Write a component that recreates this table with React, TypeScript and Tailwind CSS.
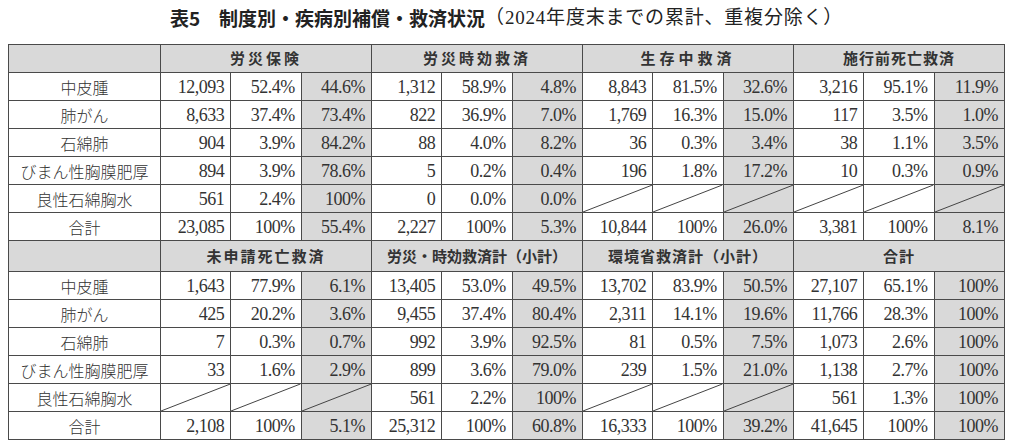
const NUM = "font-['Liberation_Serif','Times_New_Roman',serif]";
const JP = "font-['Noto_Sans_CJK_JP','Noto_Sans',sans-serif]";

type Cell = string | null;

const top = {
  groups: ["労災保険", "労災時効救済", "生存中救済", "施行前死亡救済"],
  tracking: ["tracking-[3px]", "tracking-[3px]", "tracking-[4px]", "tracking-[1px]"],
  rows: [
    ["中皮腫", "12,093", "52.4%", "44.6%", "1,312", "58.9%", "4.8%", "8,843", "81.5%", "32.6%", "3,216", "95.1%", "11.9%"],
    ["肺がん", "8,633", "37.4%", "73.4%", "822", "36.9%", "7.0%", "1,769", "16.3%", "15.0%", "117", "3.5%", "1.0%"],
    ["石綿肺", "904", "3.9%", "84.2%", "88", "4.0%", "8.2%", "36", "0.3%", "3.4%", "38", "1.1%", "3.5%"],
    ["びまん性胸膜肥厚", "894", "3.9%", "78.6%", "5", "0.2%", "0.4%", "196", "1.8%", "17.2%", "10", "0.3%", "0.9%"],
    ["良性石綿胸水", "561", "2.4%", "100%", "0", "0.0%", "0.0%", null, null, null, null, null, null],
    ["合計", "23,085", "100%", "55.4%", "2,227", "100%", "5.3%", "10,844", "100%", "26.0%", "3,381", "100%", "8.1%"],
  ] as Cell[][],
};

const bottom = {
  groups: ["未申請死亡救済", "労災・時効救済計（小計）", "環境省救済計（小計）", "合計"],
  tracking: ["tracking-[2px]", "tracking-[0px]", "tracking-[1px]", "tracking-[1px]"],
  rows: [
    ["中皮腫", "1,643", "77.9%", "6.1%", "13,405", "53.0%", "49.5%", "13,702", "83.9%", "50.5%", "27,107", "65.1%", "100%"],
    ["肺がん", "425", "20.2%", "3.6%", "9,455", "37.4%", "80.4%", "2,311", "14.1%", "19.6%", "11,766", "28.3%", "100%"],
    ["石綿肺", "7", "0.3%", "0.7%", "992", "3.9%", "92.5%", "81", "0.5%", "7.5%", "1,073", "2.6%", "100%"],
    ["びまん性胸膜肥厚", "33", "1.6%", "2.9%", "899", "3.6%", "79.0%", "239", "1.5%", "21.0%", "1,138", "2.7%", "100%"],
    ["良性石綿胸水", null, null, null, "561", "2.2%", "100%", null, null, null, "561", "1.3%", "100%"],
    ["合計", "2,108", "100%", "5.1%", "25,312", "100%", "60.8%", "16,333", "100%", "39.2%", "41,645", "100%", "100%"],
  ] as Cell[][],
};

const Slash = () => (
  <svg className="absolute inset-0 h-full w-full" preserveAspectRatio="none" viewBox="0 0 100 100">
    <line x1="0" y1="100" x2="100" y2="0" stroke="#444" strokeWidth="1" vectorEffect="non-scaling-stroke" />
  </svg>
);

const Section = ({ data, headH }: { data: typeof top; headH: string }) => (
  <>
    <tr className={headH}>
      <td className="border border-[#4a4a4a] bg-[#d9d9d9]" />
      {data.groups.map((g, i) => (
        <td
          key={g}
          colSpan={3}
          className={`border border-[#4a4a4a] bg-[#d9d9d9] text-center text-[15px] font-bold text-[#333] ${JP} ${data.tracking[i]}`}
        >
          {g}
        </td>
      ))}
    </tr>
    {data.rows.map((row) => (
      <tr key={row[0]} className="h-[28px]">
        <td className={`border border-[#4a4a4a] bg-white text-center text-[16px] font-light text-[#333] ${JP}`}>
          {row[0]}
        </td>
        {row.slice(1).map((c, i) => (
          <td
            key={i}
            className={`relative border border-[#4a4a4a] pr-[6px] text-right text-[18px] leading-none text-[#333] ${NUM} tracking-[-0.5px] ${
              i % 3 === 2 ? "bg-[#d9d9d9]" : "bg-white"
            }`}
          >
            {c === null ? <Slash /> : c}
          </td>
        ))}
      </tr>
    ))}
  </>
);

export default function App() {
  return (
    <div className="min-h-[445px] w-[1024px] bg-white">
      <div className="ml-[8px] w-[997px]">
        <h1 className="flex h-[44px] items-center justify-center pb-[8px] text-[19px] text-[#222]">
          <span className={`${JP} font-bold`}>表5　制度別・疾病別補償・救済状況</span>
          <span className="font-['Liberation_Serif','Noto_Sans_CJK_JP',serif] tracking-[0.8px]">（2024年度末までの累計、重複分除く）</span>
        </h1>
        <table className="w-[997px] table-fixed border-collapse border border-[#4a4a4a]">
          <colgroup>
            <col className="w-[152px]" />
            {Array.from({ length: 12 }).map((_, i) => (
              <col key={i} />
            ))}
          </colgroup>
          <tbody>
            <Section data={top} headH="h-[28px]" />
            <Section data={bottom} headH="h-[31px]" />
          </tbody>
        </table>
      </div>
    </div>
  );
}
